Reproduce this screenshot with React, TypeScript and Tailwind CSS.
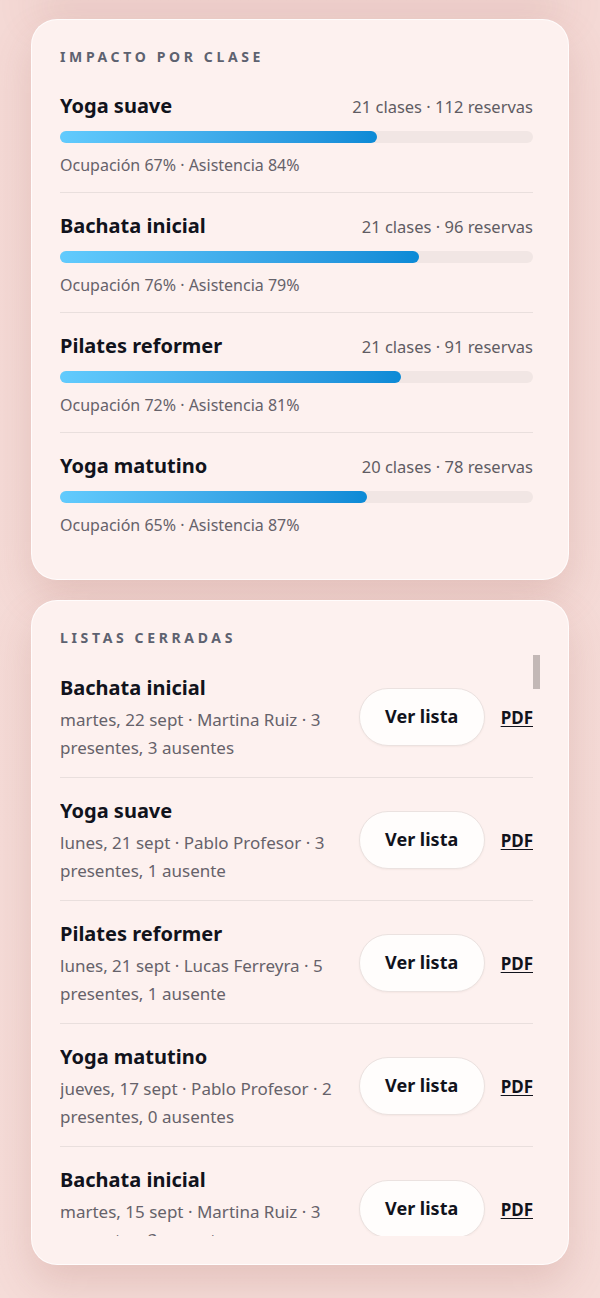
import React from "react";

const impact = [
  { name: "Yoga suave", classes: 21, bookings: 112, occupancy: 67, attendance: 84 },
  { name: "Bachata inicial", classes: 21, bookings: 96, occupancy: 76, attendance: 79 },
  { name: "Pilates reformer", classes: 21, bookings: 91, occupancy: 72, attendance: 81 },
  { name: "Yoga matutino", classes: 20, bookings: 78, occupancy: 65, attendance: 87 },
];

const closedLists = [
  { name: "Bachata inicial", date: "martes, 22 sept", teacher: "Martina Ruiz", present: 3, absent: 3 },
  { name: "Yoga suave", date: "lunes, 21 sept", teacher: "Pablo Profesor", present: 3, absent: 1 },
  { name: "Pilates reformer", date: "lunes, 21 sept", teacher: "Lucas Ferreyra", present: 5, absent: 1 },
  { name: "Yoga matutino", date: "jueves, 17 sept", teacher: "Pablo Profesor", present: 2, absent: 0 },
  { name: "Bachata inicial", date: "martes, 15 sept", teacher: "Martina Ruiz", present: 3, absent: 3 },
  { name: "Yoga suave", date: "lunes, 14 sept", teacher: "Pablo Profesor", present: 4, absent: 1 },
];

const plural = (n: number, one: string, many: string) => `${n} ${n === 1 ? one : many}`;

function SectionLabel({ children }: { children: React.ReactNode }) {
  return (
    <h2 className="text-[14px] leading-[18px] font-bold uppercase tracking-[0.26em] text-[#5d6270]">
      {children}
    </h2>
  );
}

function ImpactRow({ item }: { item: (typeof impact)[number] }) {
  return (
    <div className="pt-[19px] pb-[15px]">
      <div className="flex items-baseline justify-between">
        <span className="text-[20px] leading-[28px] font-bold text-[#11131c]">{item.name}</span>
        <span className="text-[16.5px] text-[#5f5c63]">
          {item.classes} clases · {item.bookings} reservas
        </span>
      </div>
      <div className="mt-[11px] h-[12px] w-full rounded-full bg-[#f1e6e4]">
        <div
          className="h-full rounded-full bg-gradient-to-r from-[#62cbfd] to-[#0b8ad6]"
          style={{ width: `${item.occupancy}%` }}
        />
      </div>
      <p className="mt-[10px] text-[16px] leading-[24px] text-[#66626a]">
        Ocupación {item.occupancy}% · Asistencia {item.attendance}%
      </p>
    </div>
  );
}

function ListRow({ item }: { item: (typeof closedLists)[number] }) {
  return (
    <div className="flex items-center gap-4 pt-[19px] pb-[15px]">
      <div className="min-w-0 flex-1">
        <p className="text-[20px] leading-[28px] font-bold text-[#11131c]">{item.name}</p>
        <p className="mt-1 text-[17px] leading-[28px] text-[#66626a]">
          {item.date} · {item.teacher} · {item.present} presentes, {plural(item.absent, "ausente", "ausentes")}
        </p>
      </div>
      <button className="-mt-[3px] h-[58px] w-[126px] shrink-0 rounded-full border border-[#ebe2e0] bg-[#fffdfc] text-[18px] font-bold text-[#11131c] shadow-[0_1px_2px_rgba(120,80,70,0.06)]">
        Ver lista
      </button>
      <a href="#" className="shrink-0 text-[17px] font-bold text-[#11131c] underline underline-offset-2">
        PDF
      </a>
    </div>
  );
}

export default function App() {
  return (
    <div
      className="min-h-[1298px] bg-gradient-to-b from-[#f4d9d5] to-[#f5dcd8] px-[31px] pt-[19px] pb-[33px]"
      style={{ fontFamily: '"Noto Sans", "Open Sans", sans-serif' }}
    >
      {/* end of the card above, scrolled out of view */}
      <div className="-mt-[40px] mb-[20px] h-[20px] rounded-b-[26px] border border-white/70 bg-[#fdf2f0] shadow-[0_18px_40px_rgba(160,90,80,0.2)]" />

      <section className="rounded-[26px] border border-white/80 bg-[#fdf1ef] pt-[28px] pb-[27px] pl-[28px] pr-[35px] shadow-[0_18px_40px_rgba(160,90,80,0.2)]">
        <div className="mb-[7px]">
          <SectionLabel>Impacto por clase</SectionLabel>
        </div>
        <div className="divide-y divide-[#e9dfdd]">
          {impact.map((item) => (
            <ImpactRow key={item.name} item={item} />
          ))}
        </div>
      </section>

      <section className="mt-[20px] rounded-[26px] border border-white/80 bg-[#fdf1ef] pt-[28px] pb-[28px] pl-[28px] pr-[35px] shadow-[0_18px_40px_rgba(160,90,80,0.2)]">
        <div className="mb-2">
          <SectionLabel>Listas cerradas</SectionLabel>
        </div>
        <div className="relative">
          <div className="h-[581px] overflow-y-auto divide-y divide-[#e9dfdd] [scrollbar-width:none]">
            {closedLists.map((item, i) => (
              <ListRow key={i} item={item} />
            ))}
          </div>
          {/* scrollbar thumb */}
          <div className="absolute top-0 -right-[7px] h-[34px] w-[7px] bg-[#c3b8b6]" />
        </div>
      </section>
    </div>
  );
}
